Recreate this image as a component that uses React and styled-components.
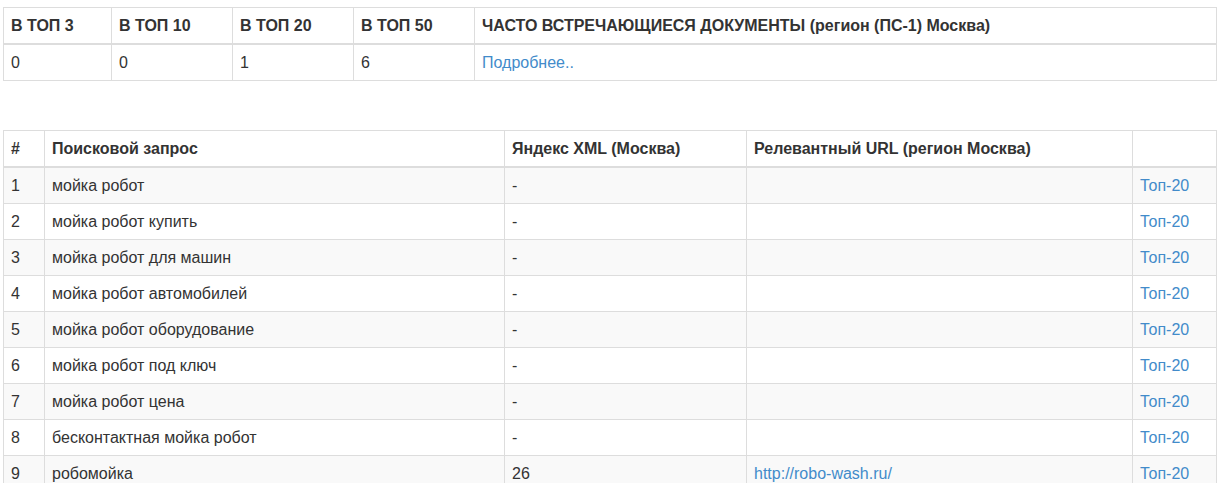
import React from 'react';
import styled, { createGlobalStyle } from 'styled-components';

const GlobalStyle = createGlobalStyle`
    body {
        margin: 0;
        background: #fff;
        font-family: "Liberation Sans", Arial, Helvetica, sans-serif;
        font-size: 16px;
        line-height: 20px;
        color: #333;
    }
`;

const Page = styled.div`
    padding: 7px 0 0 3px;
`;

const Table = styled.table`
    width: 1214px;
    table-layout: fixed;
    border-collapse: collapse;
    border-spacing: 0;
    border: 1px solid #ddd;
    margin-bottom: ${({ gap }) => gap || 20}px;
`;

const Th = styled.th`
    text-align: left;
    font-weight: bold;
    padding: 8px 7px 7px;
    line-height: 20px;
    vertical-align: bottom;
    border: 1px solid #ddd;
    border-bottom: 2px solid #ddd;
    white-space: nowrap;
`;

const Row = styled.tr`
    background: ${({ striped }) => (striped ? '#f9f9f9' : '#fff')};
`;

const Td = styled.td`
    padding: 8px 7px 7px;
    line-height: 20px;
    vertical-align: top;
    border: 1px solid #ddd;
    white-space: nowrap;
`;

const Link = styled.a`
    color: #428bca;
    text-decoration: none;
`;

const queries = [
    ['мойка робот', '-', ''],
    ['мойка робот купить', '-', ''],
    ['мойка робот для машин', '-', ''],
    ['мойка робот автомобилей', '-', ''],
    ['мойка робот оборудование', '-', ''],
    ['мойка робот под ключ', '-', ''],
    ['мойка робот цена', '-', ''],
    ['бесконтактная мойка робот', '-', ''],
    ['робомойка', '26', 'http://robo-wash.ru/'],
];

function App() {
    return (
        <>
            <GlobalStyle />
            <Page>
                <Table gap={49}>
                    <colgroup>
                        <col style={{ width: 108 }} />
                        <col style={{ width: 121 }} />
                        <col style={{ width: 121 }} />
                        <col style={{ width: 121 }} />
                        <col />
                    </colgroup>
                    <thead>
                        <tr>
                            <Th>В ТОП 3</Th>
                            <Th>В ТОП 10</Th>
                            <Th>В ТОП 20</Th>
                            <Th>В ТОП 50</Th>
                            <Th>ЧАСТО ВСТРЕЧАЮЩИЕСЯ ДОКУМЕНТЫ (регион (ПС-1) Москва)</Th>
                        </tr>
                    </thead>
                    <tbody>
                        <Row>
                            <Td>0</Td>
                            <Td>0</Td>
                            <Td>1</Td>
                            <Td>6</Td>
                            <Td><Link href="#">Подробнее..</Link></Td>
                        </Row>
                    </tbody>
                </Table>

                <Table>
                    <colgroup>
                        <col style={{ width: 41 }} />
                        <col style={{ width: 460 }} />
                        <col style={{ width: 242 }} />
                        <col style={{ width: 386 }} />
                        <col />
                    </colgroup>
                    <thead>
                        <tr>
                            <Th>#</Th>
                            <Th>Поисковой запрос</Th>
                            <Th>Яндекс XML (Москва)</Th>
                            <Th>Релевантный URL (регион Москва)</Th>
                            <Th></Th>
                        </tr>
                    </thead>
                    <tbody>
                        {queries.map(([q, pos, url], i) => (
                            <Row key={i} striped={i % 2 === 0}>
                                <Td>{i + 1}</Td>
                                <Td>{q}</Td>
                                <Td>{pos}</Td>
                                <Td>{url && <Link href="#">{url}</Link>}</Td>
                                <Td><Link href="#">Топ-20</Link></Td>
                            </Row>
                        ))}
                    </tbody>
                </Table>
            </Page>
        </>
    );
}

export default App;
